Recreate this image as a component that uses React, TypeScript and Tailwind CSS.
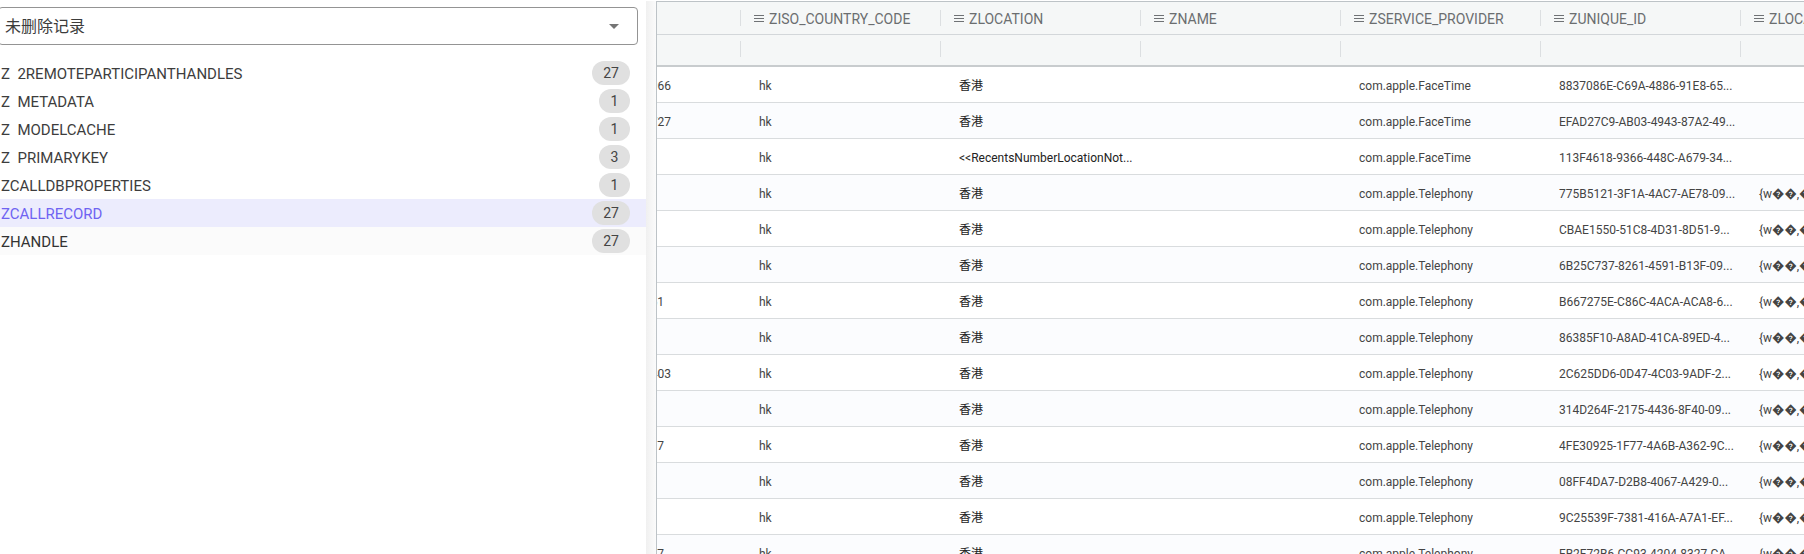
import React from "react";

const tables = [
  { name: "Z  2REMOTEPARTICIPANTHANDLES", count: 27 },
  { name: "Z  METADATA", count: 1 },
  { name: "Z  MODELCACHE", count: 1 },
  { name: "Z  PRIMARYKEY", count: 3 },
  { name: "ZCALLDBPROPERTIES", count: 1 },
  { name: "ZCALLRECORD", count: 27, active: true },
  { name: "ZHANDLE", count: 27, hovered: true },
];

const columns = ["ZISO_COUNTRY_CODE", "ZLOCATION", "ZNAME", "ZSERVICE_PROVIDER", "ZUNIQUE_ID", "ZLOCATIONX"];

type Row = { tail: string; short?: boolean; location: string; provider: string; id: string; blob: boolean };

const rows: Row[] = [
  { tail: "966", location: "香港", provider: "com.apple.FaceTime", id: "8837086E-C69A-4886-91E8-65...", blob: false },
  { tail: "727", location: "香港", provider: "com.apple.FaceTime", id: "EFAD27C9-AB03-4943-87A2-49...", blob: false },
  { tail: "", location: "<<RecentsNumberLocationNot...", provider: "com.apple.FaceTime", id: "113F4618-9366-448C-A679-34...", blob: false },
  { tail: "", location: "香港", provider: "com.apple.Telephony", id: "775B5121-3F1A-4AC7-AE78-09...", blob: true },
  { tail: "", location: "香港", provider: "com.apple.Telephony", id: "CBAE1550-51C8-4D31-8D51-9...", blob: true },
  { tail: "", location: "香港", provider: "com.apple.Telephony", id: "6B25C737-8261-4591-B13F-09...", blob: true },
  { tail: "51", short: true, location: "香港", provider: "com.apple.Telephony", id: "B667275E-C86C-4ACA-ACA8-6...", blob: true },
  { tail: "", location: "香港", provider: "com.apple.Telephony", id: "86385F10-A8AD-41CA-89ED-4...", blob: true },
  { tail: "403", location: "香港", provider: "com.apple.Telephony", id: "2C625DD6-0D47-4C03-9ADF-2...", blob: true },
  { tail: "", location: "香港", provider: "com.apple.Telephony", id: "314D264F-2175-4436-8F40-09...", blob: true },
  { tail: "097", short: true, location: "香港", provider: "com.apple.Telephony", id: "4FE30925-1F77-4A6B-A362-9C...", blob: true },
  { tail: "", location: "香港", provider: "com.apple.Telephony", id: "08FF4DA7-D2B8-4067-A429-0...", blob: true },
  { tail: "", location: "香港", provider: "com.apple.Telephony", id: "9C25539F-7381-416A-A7A1-EF...", blob: true },
  { tail: "277", short: true, location: "香港", provider: "com.apple.Telephony", id: "FB2F72B6-CC93-4204-8327-CA...", blob: true },
];

const MenuIcon = () => (
  <svg width="10" height="8" viewBox="0 0 10 8" className="shrink-0 text-[#6f7275]" fill="currentColor">
    <rect x="0" y="0" width="10" height="1" />
    <rect x="0" y="3" width="10" height="1" />
    <rect x="0" y="6" width="10" height="1" />
  </svg>
);

const TableList = () => (
  <div className="w-[646px] shrink-0 bg-white overflow-hidden">
    <div className="pt-[6px] pr-2">
      <div className="-ml-[2px] flex h-[38px] items-center justify-between rounded-[4px] border border-[#949494] pl-[6px] pr-[18px] text-[16px] text-[#3c3c3c]">
        <span className="pt-[2px]">未删除记录</span>
        <svg width="10" height="5" viewBox="0 0 10 5" className="text-[#757575]" fill="currentColor">
          <path d="M0 0h10L5 5z" />
        </svg>
      </div>
    </div>
    <ul className="mt-[14px]">
      {tables.map((t) => (
        <li
          key={t.name}
          className={`flex h-7 items-center justify-between pl-px pr-[16px] text-[15px] ${
            t.active ? "bg-[#ececfd] text-[#6f63f2]" : t.hovered ? "bg-[#fbfbfb] text-[#333]" : "text-[#3d3d3d]"
          }`}
        >
          <span className="whitespace-pre pt-[2px]">{t.name}</span>
          <span className="flex h-6 min-w-[31px] items-center justify-center rounded-full bg-[#e0e0e0] px-[11px] text-[14px] text-[#444]">
            {t.count}
          </span>
        </li>
      ))}
    </ul>
  </div>
);

const Grid = () => (
  <div className="min-w-0 flex-1 overflow-hidden border-l border-t border-[#bdc3c7] bg-white text-[12px] text-[#444]">
    <div className="flex h-[33px] items-center border-b border-[#d3d7da] bg-[#f5f7f7] text-[14px] text-[#6b6e70]">
      <div className="w-[83px] shrink-0" />
      {columns.map((c, i) => (
        <div key={c} className="flex w-[200px] shrink-0 items-center overflow-hidden whitespace-nowrap">
          <span className="h-4 w-px shrink-0 bg-[#dcdfe1]" />
          <span className="ml-[13px] mr-[5px] pt-[2px]">
            <MenuIcon />
          </span>
          <span className="pt-[2px]">{i === 5 ? "ZLOCATION" : c}</span>
        </div>
      ))}
    </div>
    <div className="flex h-[32px] items-center border-b-2 border-[#c8ccce] bg-[#f5f7f7] pb-[2px]">
      <div className="w-[83px] shrink-0" />
      {columns.map((c) => (
        <div key={c} className="w-[200px] shrink-0">
          <div className="h-4 w-px bg-[#dcdfe1]" />
        </div>
      ))}
    </div>
    {rows.map((r, i) => (
      <div
        key={r.id}
        className={`flex h-9 items-center border-b border-[#d9dcde] pt-[2px] ${i % 2 === 1 ? "bg-[#fbfcfe]" : "bg-white"}`}
      >
        <div className={`flex w-[83px] shrink-0 justify-end overflow-hidden ${r.short ? "pr-[76px]" : "pr-[69px]"}`}>
          <span className="whitespace-nowrap">{r.tail}</span>
        </div>
        <div className="w-[200px] shrink-0 pl-[19px]">hk</div>
        <div className="w-[200px] shrink-0 pl-[19px] text-[#222]">{r.location}</div>
        <div className="w-[200px] shrink-0" />
        <div className="w-[200px] shrink-0 pl-[19px]">{r.provider}</div>
        <div className="w-[200px] shrink-0 pl-[19px]">{r.id}</div>
        <div className="w-[200px] shrink-0 overflow-hidden whitespace-nowrap pl-[19px]">
          {r.blob ? "{w\uFFFD\uFFFD,\uFFFD\uFFFD\uFFFD" : ""}
        </div>
      </div>
    ))}
  </div>
);

export default function App() {
  return (
    <div className="flex h-[554px] w-[1804px] overflow-hidden bg-white pt-px font-['Roboto','Noto_Sans_CJK_SC',sans-serif]">
      <TableList />
      <div className="w-[10px] shrink-0 bg-gradient-to-r from-[#f0f0f0] to-[#fbfbfb]" />
      <Grid />
    </div>
  );
}
